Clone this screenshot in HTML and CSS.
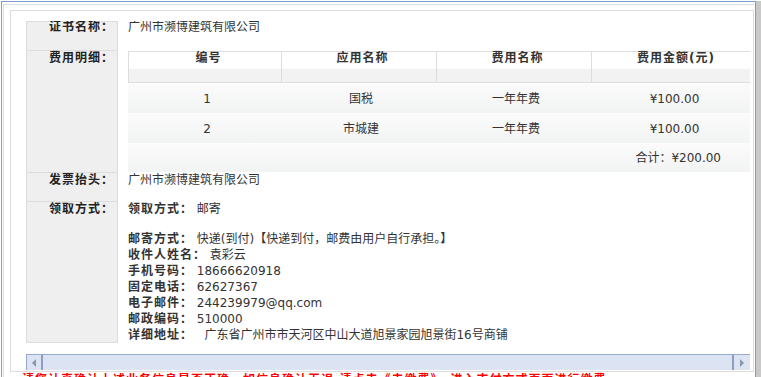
FILE: index.html
```html
<!DOCTYPE html>
<html lang="zh-CN">

<head>
  <meta charset="UTF-8">
  <title>确认业务信息</title>
  <link rel="stylesheet" href="styles.css">
</head>

<body>
  <div class="screen">
    <div class="window">
      <div class="panel">
        <div class="box">
          <div class="scroller">
            <div class="info">
              <div class="label first">证书名称：</div>
              <div class="value first">广州市濒博建筑有限公司</div>

              <div class="label">费用明细：</div>
              <div class="value fee-cell">
                <table class="fees">
                  <thead>
                    <tr>
                      <th>编号</th>
                      <th>应用名称</th>
                      <th>费用名称</th>
                      <th>费用金额(元)</th>
                    </tr>
                  </thead>
                  <tbody>
                    <tr>
                      <td>1</td>
                      <td>国税</td>
                      <td>一年年费</td>
                      <td>¥100.00</td>
                    </tr>
                    <tr>
                      <td>2</td>
                      <td>市城建</td>
                      <td>一年年费</td>
                      <td>¥100.00</td>
                    </tr>
                    <tr class="total">
                      <td colspan="4">合计：¥200.00</td>
                    </tr>
                  </tbody>
                </table>
              </div>

              <div class="label">发票抬头：</div>
              <div class="value">广州市濒博建筑有限公司</div>

              <div class="label">领取方式：</div>
              <div class="value">
                <div><b>领取方式：</b> 邮寄</div>
                <div class="address">
                  <div><b>邮寄方式：</b> 快递(到付)【快递到付，邮费由用户自行承担。】</div>
                  <div><b>收件人姓名：</b> 袁彩云</div>
                  <div><b>手机号码：</b> 18666620918</div>
                  <div><b>固定电话：</b> 62627367</div>
                  <div><b>电子邮件：</b> 244239979@qq.com</div>
                  <div><b>邮政编码：</b> 510000</div>
                  <div><b>详细地址：</b>&nbsp;&nbsp;&nbsp;广东省广州市市天河区中山大道旭景家园旭景街16号商铺</div>
                </div>
              </div>
            </div>
          </div>
          <div class="hscroll">
            <span class="btn btn-left"><i class="arrow-left"></i></span>
            <span class="track"></span>
            <span class="btn btn-right"><i class="arrow-right"></i></span>
          </div>
        </div>
        <p class="notice">请您认真确认上述业务信息是否正确，如信息确认无误,请点击《去缴费》，进入支付方式页面进行缴费</p>
      </div>
    </div>
    <div class="side"></div>
  </div>
</body>

</html>
```

FILE: styles.css
```css
html,
body {
  margin: 0;
  height: 100%;
  overflow: hidden;
}

body {
  font-family: "DejaVu Sans", "Noto Sans CJK SC", sans-serif;
  font-size: 12px;
  color: #333;
  background-color: #fff;
}

.screen {
  display: flex;
  height: 377px;
  padding: 1px 0 0 1px;
  box-sizing: border-box;
}

.window {
  width: 755px;
  border: 1px solid #7c9bce;
  border-bottom: none;
  box-sizing: border-box;
}

.side {
  flex: 1;
  background-color: #c9c9c9;
}

.panel {
  width: 751px;
  margin: 2px 0 0 1px;
  border-top: 1px solid #ddd;
  border-left: 1px solid #ddd;
  box-sizing: border-box;
}

.box {
  width: 744px;
  height: 362px;
  margin: 5px 0 0 6px;
  padding: 10px 3px 1px 15px;
  border: 1px solid #ddd;
  box-sizing: border-box;
}

.scroller {
  height: 333px;
  overflow: hidden;
}

.info {
  display: grid;
  grid-template-columns: 92px 635px;
}

.label {
  min-height: 29px;
  box-sizing: border-box;
  background-color: #efefef;
  border: 1px solid #ddd;
  border-bottom: none;
  padding-right: 3px;
  text-align: right;
  font-weight: bold;
  letter-spacing: 1px;
  line-height: 14px;
  color: #222;
}

.label.first {
  height: 29px;
  line-height: 10px;
}

.label:nth-last-child(2) {
  border-bottom: 1px solid #ddd;
}

.value {
  padding-left: 10px;
  line-height: 16px;
}

.value.first {
  line-height: 12px;
}

.value b {
  letter-spacing: 1px;
  color: #333;
}

.fee-cell {
  padding-top: 1px;
}

.address {
  margin-top: 14px;
}

/* fee table */

.fees {
  width: 625px;
  table-layout: fixed;
  border-collapse: separate;
  border-spacing: 0;
}

.fees th,
.fees td {
  box-sizing: border-box;
  padding: 0;
  text-align: center;
  font-weight: normal;
}

.fees th {
  height: 32px;
  padding: 0 0 18px 7px;
  line-height: 12px;
  vertical-align: top;
  font-weight: bold;
  letter-spacing: 1px;
  border-top: 1px solid #ddd;
  border-bottom: 1px solid #ddd;
  border-left: 1px solid #ddd;
  background: linear-gradient(#fff 17px, #f2f2f2 17px);
}

.fees th:nth-child(1) {
  width: 153px;
}

.fees th:nth-child(2),
.fees th:nth-child(3) {
  width: 155px;
}

.fees td {
  height: 30px;
  padding-left: 5px;
  line-height: 28px;
  border-top: 1px solid #fdfdfd;
  background: linear-gradient(#fbfbfb, #f2f3f3);
}

.fees .total td {
  height: 29px;
  line-height: 27px;
  text-align: right;
  padding-right: 32px;
}

/* fake horizontal scrollbar */

.hscroll {
  display: flex;
  height: 16px;
  border-top: 1px solid #98a8c8;
  background-color: #dce3f3;
  box-sizing: border-box;
}

.btn {
  display: flex;
  align-items: center;
  justify-content: center;
  box-sizing: border-box;
}

.btn-left {
  width: 17px;
  border-left: 1px solid #98a8c8;
  border-right: 2px solid #8c9dc0;
}

.btn-right {
  width: 18px;
  border-left: 2px solid #8c9dc0;
}

.track {
  flex: 1;
}

.arrow-left,
.arrow-right {
  width: 0;
  height: 0;
  border-top: 4px solid transparent;
  border-bottom: 4px solid transparent;
}

.arrow-left {
  border-right: 4px solid #8a94aa;
}

.arrow-right {
  border-left: 4px solid #8a94aa;
}

.notice {
  margin: 0;
  padding-left: 18px;
  color: #f00;
  font-weight: bold;
  letter-spacing: 1px;
  line-height: 16px;
  white-space: nowrap;
}
```
